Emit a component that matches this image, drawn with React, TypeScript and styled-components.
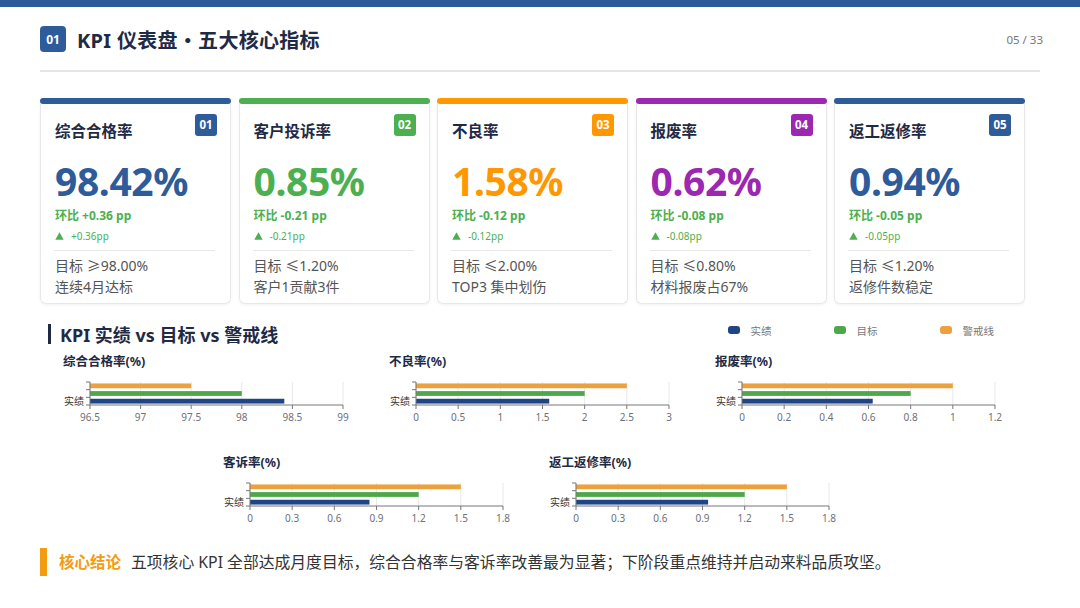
import styled, { createGlobalStyle } from 'styled-components';

const GlobalStyle = createGlobalStyle`
  body {
    margin: 0;
    background: #ffffff;
    font-family: 'Noto Sans', 'Noto Sans CJK SC', sans-serif;
  }
`;

const BLUE = '#2e5c9a';
const GREEN = '#4caf50';
const ORANGE = '#ff9800';
const PURPLE = '#9c27b0';

const CHART_NAVY = '#1f4586';
const CHART_GREEN = '#4ea84b';
const CHART_ORANGE = '#eba23e';

const Page = styled.div`
  width: 1080px;
  height: 608px;
  overflow: hidden;
  background: #ffffff;
  color: #1f2a44;
`;

const TopBar = styled.div`
  height: 7px;
  background: ${BLUE};
`;

const Header = styled.div`
  display: flex;
  align-items: center;
  margin: 19px 37px 0 40px;
  height: 26px;
`;

const HeaderBadge = styled.div`
  width: 26px;
  height: 26px;
  border-radius: 4px;
  background: ${BLUE};
  color: #fff;
  font-size: 12px;
  font-weight: 700;
  display: flex;
  align-items: center;
  justify-content: center;
`;

const Title = styled.h1`
  margin: 0 0 0 11px;
  font-size: 20px;
  font-weight: 700;
  color: #1f2a44;
  letter-spacing: 0.3px;
`;

const PageNo = styled.span`
  margin-left: auto;
  font-size: 11.5px;
  color: #777;
`;

const Divider = styled.div`
  margin: 18px 40px 0;
  height: 1.5px;
  background: #e6e6e6;
`;

const CardRow = styled.div`
  display: grid;
  grid-template-columns: repeat(5, 191px);
  column-gap: 7.5px;
  margin: 26px 0 0 40px;
`;

const Card = styled.div`
  position: relative;
  height: 206px;
  border: 1px solid #e8e8e8;
  border-top: none;
  border-radius: 6px;
  box-sizing: border-box;
  box-shadow: 0 1px 3px rgba(0, 0, 0, 0.06);
  display: flex;
  flex-direction: column;
`;

const CardBar = styled.div<{ $color: string }>`
  height: 6px;
  margin: 0 -1px;
  border-radius: 3px;
  background: ${(p) => p.$color};
`;

const CardBody = styled.div`
  padding: 10px 13px 0 14px;
  display: flex;
  flex-direction: column;
`;

const CardHead = styled.div`
  display: flex;
  justify-content: space-between;
  align-items: flex-start;
`;

const CardTitle = styled.div`
  padding-top: 8px;
  font-size: 15.5px;
  line-height: 19px;
  font-weight: 700;
  color: #1f2a44;
`;

const NumBadge = styled.div<{ $color: string }>`
  width: 22px;
  height: 22px;
  border-radius: 3px;
  background: ${(p) => p.$color};
  color: #fff;
  font-size: 11.5px;
  font-weight: 700;
  display: flex;
  align-items: center;
  justify-content: center;
`;

const Value = styled.div<{ $color: string }>`
  margin-top: 16px;
  font-size: 39px;
  line-height: 48px;
  font-weight: 700;
  color: ${(p) => p.$color};
  letter-spacing: -0.4px;
`;

const Delta = styled.div`
  margin-top: 3px;
  font-size: 12px;
  line-height: 16px;
  font-weight: 700;
  color: ${GREEN};
`;

const Trend = styled.div`
  margin-top: 5px;
  display: flex;
  align-items: center;
  gap: 7px;
  font-size: 10px;
  line-height: 14px;
  color: ${GREEN};

  svg {
    fill: ${GREEN};
  }
`;

const CardRule = styled.div`
  margin: 7px 2px 0 -1px;
  height: 1px;
  background: #e8e8e8;
`;

const Note = styled.div<{ $first?: boolean }>`
  margin-top: ${(p) => (p.$first ? '4px' : '0')};
  font-size: 14px;
  line-height: 21px;
  color: #555;
`;

const SectionHead = styled.div`
  display: flex;
  align-items: center;
  margin: 19px 86px 0 48px;
  height: 22px;
`;

const SectionMark = styled.div`
  width: 3px;
  height: 20px;
  background: #1f2a44;
`;

const SectionTitle = styled.h2`
  margin: 0 0 0 9px;
  font-size: 18px;
  font-weight: 700;
  color: #1f2a44;
`;

const Legend = styled.div`
  margin-left: auto;
  display: flex;
  gap: 62px;
  align-self: flex-start;
  margin-top: 0;
`;

const LegendItem = styled.div`
  display: flex;
  align-items: center;
  gap: 11px;
  font-size: 10.5px;
  color: #777;
`;

const Swatch = styled.span<{ $color: string }>`
  width: 12px;
  height: 8px;
  border-radius: 3px;
  background: ${(p) => p.$color};
`;

const ChartGrid = styled.div`
  margin: 9px 0 0 63px;
  width: 978px;
  display: flex;
  flex-direction: column;
  gap: 29px;
`;

const ChartRow = styled.div<{ $indent?: number }>`
  display: flex;
  padding-left: ${(p) => p.$indent ?? 0}px;
`;

const ChartBox = styled.div`
  width: 326px;
  height: 72px;
`;

const ChartTitle = styled.div`
  font-size: 12.5px;
  line-height: 16px;
  font-weight: 700;
  color: #1f2a44;
`;

const Footer = styled.div`
  display: flex;
  align-items: center;
  margin: 21px 0 0 40px;
  height: 28px;
`;

const FooterMark = styled.div`
  width: 7px;
  height: 28px;
  background: #f39c12;
`;

const FooterLabel = styled.span`
  margin-left: 12px;
  font-size: 15.5px;
  font-weight: 700;
  color: #f39c12;
`;

const FooterText = styled.span`
  margin-left: 10px;
  font-size: 15.8px;
  color: #333;
`;

type Kpi = {
  name: string;
  no: string;
  color: string;
  value: string;
  delta: string;
  trend: string;
  target: string;
  note: string;
};

const kpis: Kpi[] = [
  { name: '综合合格率', no: '01', color: BLUE, value: '98.42%', delta: '环比 +0.36 pp', trend: '+0.36pp', target: '目标 ≥98.00%', note: '连续4月达标' },
  { name: '客户投诉率', no: '02', color: GREEN, value: '0.85%', delta: '环比 -0.21 pp', trend: '-0.21pp', target: '目标 ≤1.20%', note: '客户1贡献3件' },
  { name: '不良率', no: '03', color: ORANGE, value: '1.58%', delta: '环比 -0.12 pp', trend: '-0.12pp', target: '目标 ≤2.00%', note: 'TOP3 集中划伤' },
  { name: '报废率', no: '04', color: PURPLE, value: '0.62%', delta: '环比 -0.08 pp', trend: '-0.08pp', target: '目标 ≤0.80%', note: '材料报废占67%' },
  { name: '返工返修率', no: '05', color: BLUE, value: '0.94%', delta: '环比 -0.05 pp', trend: '-0.05pp', target: '目标 ≤1.20%', note: '返修件数稳定' },
];

type ChartSpec = {
  title: string;
  min: number;
  max: number;
  step: number;
  actual: number;
  target: number;
  warn: number;
};

const charts: ChartSpec[] = [
  { title: '综合合格率(%)', min: 96.5, max: 99, step: 0.5, actual: 98.42, target: 98, warn: 97.5 },
  { title: '不良率(%)', min: 0, max: 3, step: 0.5, actual: 1.58, target: 2, warn: 2.5 },
  { title: '报废率(%)', min: 0, max: 1.2, step: 0.2, actual: 0.62, target: 0.8, warn: 1 },
  { title: '客诉率(%)', min: 0, max: 1.8, step: 0.3, actual: 0.85, target: 1.2, warn: 1.5 },
  { title: '返工返修率(%)', min: 0, max: 1.8, step: 0.3, actual: 0.94, target: 1.2, warn: 1.5 },
];

const fmt = (v: number) => String(Math.round(v * 10) / 10);

// x0/x1 = plot edges, top/bottom = category band, in svg units
const X0 = 27;
const X1 = 280;
const TOP = 12;
const BOTTOM = 35;

const BarChart = ({ spec }: { spec: ChartSpec }) => {
  const sx = (v: number) => X0 + ((v - spec.min) / (spec.max - spec.min)) * (X1 - X0);
  const ticks: number[] = [];
  for (let v = spec.min; v <= spec.max + 1e-6; v += spec.step) ticks.push(v);
  const band = (BOTTOM - TOP) / 3;
  const bars = [
    { v: spec.warn, c: CHART_ORANGE },
    { v: spec.target, c: CHART_GREEN },
    { v: spec.actual, c: CHART_NAVY },
  ];
  return (
    <ChartBox>
      <ChartTitle>{spec.title}</ChartTitle>
      <svg width={326} height={56} style={{ display: 'block' }}>
        {ticks.map((t, i) => (
          <line key={`g${i}`} x1={sx(t)} x2={sx(t)} y1={TOP} y2={BOTTOM} stroke='#e8e8e8' strokeWidth={1} />
        ))}
        {bars.map((b, i) => (
          <rect
            key={`b${i}`}
            x={X0}
            y={TOP + band * i + band / 2 - 2.4}
            width={sx(b.v) - X0}
            height={4.8}
            fill={b.c}
          />
        ))}
        <line x1={X0} x2={X0} y1={TOP} y2={BOTTOM} stroke='#777' strokeWidth={1} />
        {[0, 1, 2, 3].map((k) => (
          <line key={`t${k}`} x1={X0 - 4} x2={X0} y1={TOP + band * k} y2={TOP + band * k} stroke='#777' strokeWidth={1} />
        ))}
        <line x1={X0} x2={X1} y1={BOTTOM} y2={BOTTOM} stroke='#777' strokeWidth={1} />
        {ticks.map((t, i) => (
          <g key={`l${i}`}>
            <line x1={sx(t)} x2={sx(t)} y1={BOTTOM} y2={BOTTOM + 4} stroke='#777' strokeWidth={1} />
            <text
              x={sx(t)}
              y={BOTTOM + 16}
              textAnchor='middle'
              fontSize={10}
              fill='#6e7079'
              fontFamily="'Noto Sans', sans-serif"
            >
              {fmt(t)}
            </text>
          </g>
        ))}
        <text
          x={X0 - 6}
          y={TOP + band * 2.5 + 3.5}
          textAnchor='end'
          fontSize={10}
          fill='#333'
          fontFamily="'Noto Sans CJK SC', sans-serif"
        >
          实绩
        </text>
      </svg>
    </ChartBox>
  );
};

const TriangleUp = () => (
  <svg width={9} height={8} viewBox='0 0 9 8'>
    <path d='M4.5 0.3 L8.7 7.7 L0.3 7.7 Z' />
  </svg>
);

export default function App() {
  return (
    <>
      <GlobalStyle />
      <Page>
        <TopBar />
        <Header>
          <HeaderBadge>01</HeaderBadge>
          <Title>KPI 仪表盘・五大核心指标</Title>
          <PageNo>05 / 33</PageNo>
        </Header>
        <Divider />

        <CardRow>
          {kpis.map((k) => (
            <Card key={k.no}>
              <CardBar $color={k.color} />
              <CardBody>
                <CardHead>
                  <CardTitle>{k.name}</CardTitle>
                  <NumBadge $color={k.color}>{k.no}</NumBadge>
                </CardHead>
                <Value $color={k.color}>{k.value}</Value>
                <Delta>{k.delta}</Delta>
                <Trend>
                  <TriangleUp />
                  <span>{k.trend}</span>
                </Trend>
                <CardRule />
                <Note $first>{k.target}</Note>
                <Note>{k.note}</Note>
              </CardBody>
            </Card>
          ))}
        </CardRow>

        <SectionHead>
          <SectionMark />
          <SectionTitle>KPI 实绩 vs 目标 vs 警戒线</SectionTitle>
          <Legend>
            <LegendItem>
              <Swatch $color={CHART_NAVY} />
              实绩
            </LegendItem>
            <LegendItem>
              <Swatch $color={CHART_GREEN} />
              目标
            </LegendItem>
            <LegendItem>
              <Swatch $color={CHART_ORANGE} />
              警戒线
            </LegendItem>
          </Legend>
        </SectionHead>

        <ChartGrid>
          <ChartRow>
            {charts.slice(0, 3).map((c) => (
              <BarChart key={c.title} spec={c} />
            ))}
          </ChartRow>
          <ChartRow $indent={160}>
            {charts.slice(3).map((c) => (
              <BarChart key={c.title} spec={c} />
            ))}
          </ChartRow>
        </ChartGrid>

        <Footer>
          <FooterMark />
          <FooterLabel>核心结论</FooterLabel>
          <FooterText>
            五项核心 KPI 全部达成月度目标，综合合格率与客诉率改善最为显著；下阶段重点维持并启动来料品质攻坚。
          </FooterText>
        </Footer>
      </Page>
    </>
  );
}
